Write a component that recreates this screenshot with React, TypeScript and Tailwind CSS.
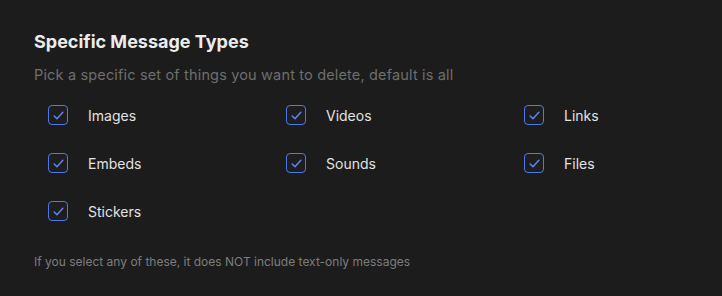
const items = ["Images", "Videos", "Links", "Embeds", "Sounds", "Files", "Stickers"];

function CheckBox() {
  return (
    <span className="flex h-5 w-5 shrink-0 items-center justify-center rounded-[4px] border border-[#4f7ae6] bg-[#1e1e1e]">
      <svg width="13" height="13" viewBox="0 0 12 12" fill="none">
        <path d="M2 6.4L4.6 9L10 3" stroke="#5a86f0" strokeWidth="1.4" strokeLinecap="round" strokeLinejoin="round" />
      </svg>
    </span>
  );
}

export default function App() {
  return (
    <div className="h-[296px] w-[722px] bg-[#1c1c1c] px-[34px] pt-[32px] font-['Inter',sans-serif]">
      <h2 className="text-[18px] font-bold leading-[20px] text-[#ececec]">Specific Message Types</h2>
      <p className="mt-[14px] text-[14.5px] leading-[18px] tracking-[0.16px] text-[#6e6e6e]">
        Pick a specific set of things you want to delete, default is all
      </p>
      <div className="mt-[21px] grid grid-cols-[238px_238px_1fr] gap-y-[28px] pl-[14px]">
        {items.map((label) => (
          <label key={label} className="flex h-5 items-center gap-5">
            <CheckBox />
            <span className="text-[14px] text-[#e2e2e2]">{label}</span>
          </label>
        ))}
      </div>
      <p className="mt-[33px] text-[12px] leading-[16px] text-[#7c7c7c]">
        If you select any of these, it does NOT include text-only messages
      </p>
    </div>
  );
}
